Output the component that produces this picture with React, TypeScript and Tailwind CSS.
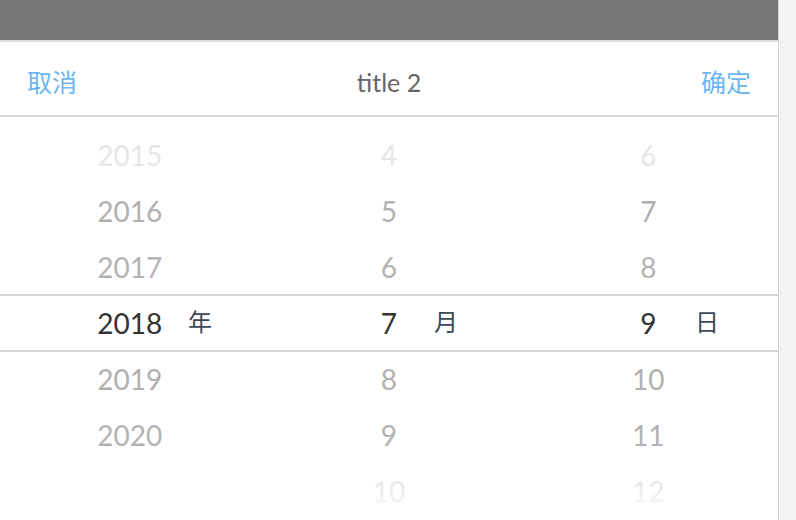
const years = ["2015", "2016", "2017", "2018", "2019", "2020", ""];
const months = ["4", "5", "6", "7", "8", "9", "10"];
const days = ["6", "7", "8", "9", "10", "11", "12"];

// colour per row index, index 3 is the selected one
const rowColor = [
  "text-[#e6e6e6]",
  "text-[#b0b0b0]",
  "text-[#b3b3b3]",
  "text-[#333333]",
  "text-[#b0b0b0]",
  "text-[#b3b3b3]",
  "text-[#e8e8e8]",
];

const Column = ({ items }: { items: string[] }) => (
  <div className="flex-1 flex flex-col">
    {items.map((v, i) => (
      <div key={i} className={`h-[56px] flex items-center justify-center ${rowColor[i]}`}>
        {v}
      </div>
    ))}
  </div>
);

const App = () => {
  return (
    <div
      className="w-[796px] h-[520px] flex bg-[#f4f4f4] overflow-hidden"
      style={{ fontFamily: 'Lato, "Noto Sans CJK SC", sans-serif' }}
    >
      <div className="w-[779px] h-full bg-white border-r border-[#d4d4d4] flex flex-col">
        <div className="h-[40px] bg-[#777777] border-b-2 border-[#dcdcdc] box-content" />
        <div className="h-[75px] flex items-center justify-between px-[27px] pt-[9px] text-[25px] border-b-2 border-[#dadada] box-border">
          <span className="text-[#6cb6f2]">取消</span>
          <span className="text-[#666] text-[25px]">title 2</span>
          <span className="text-[#6cb6f2]">确定</span>
        </div>
        <div className="relative flex-1 overflow-hidden pt-[10px] text-[28px] leading-none">
          <div className="flex">
            <Column items={years} />
            <Column items={months} />
            <Column items={days} />
          </div>
          <div className="absolute left-0 right-0 top-[177px] h-[58px] border-y-2 border-[#d6d6d6]" />
          <span className="absolute left-[188px] top-[193px] text-[24px] text-[#3b4858]">年</span>
          <span className="absolute left-[434px] top-[193px] text-[24px] text-[#3b4858]">月</span>
          <span className="absolute left-[695px] top-[193px] text-[24px] text-[#3b4858]">日</span>
          <div className="absolute left-0 right-0 top-[368px] bottom-0 bg-gradient-to-b from-white/0 to-white" />
        </div>
      </div>
    </div>
  );
};

export default App;
